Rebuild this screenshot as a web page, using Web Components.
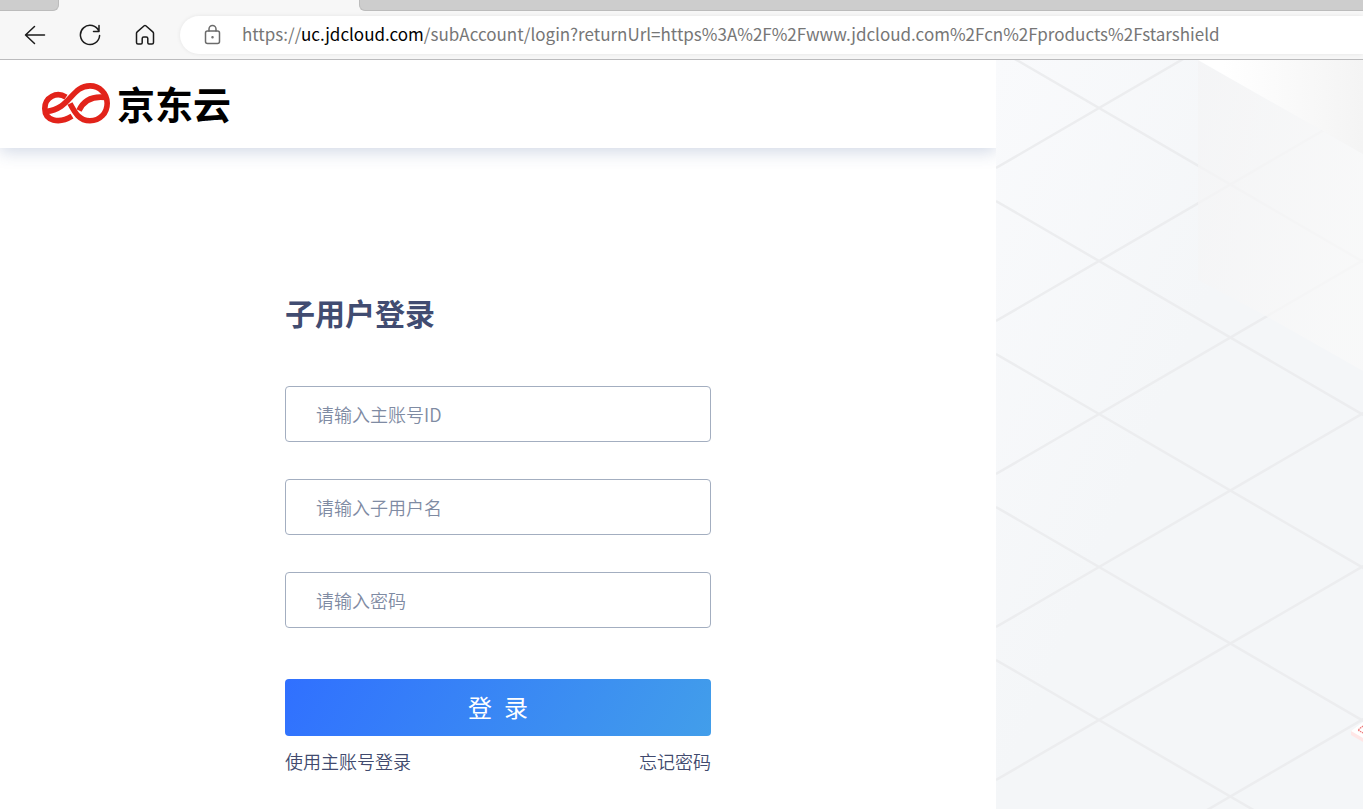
<!DOCTYPE html>
<html lang="zh-CN">
<head>
<meta charset="utf-8">
<meta name="viewport" content="width=device-width, initial-scale=1">
<title>子用户登录</title>
<style>
  html, body {
    margin: 0;
    min-height: 100%;
  }

  body {
    --color-title: #414c71;
    --color-link: #414a6e;
    --color-hint: #7f8ba3;
    --color-border: #a3aec0;
    background: #fff;
    display: flex;
    flex-direction: column;
    font-family: "Noto Sans CJK SC", sans-serif;
    min-height: 100vh;
    overflow: hidden;
  }
</style>
</head>
<body>
<browser-bar host="uc.jdcloud.com" path="/subAccount/login?returnUrl=https%3A%2F%2Fwww.jdcloud.com%2Fcn%2Fproducts%2Fstarshield"></browser-bar>
<login-page>
  <brand-header slot="header">京东云</brand-header>
  <login-form>
    <span slot="title">子用户登录</span>
    <login-field name="account" label="请输入主账号ID"></login-field>
    <login-field name="user" label="请输入子用户名"></login-field>
    <login-field name="password" type="password" label="请输入密码"></login-field>
    <span slot="submit">登&ensp;录</span>
    <a slot="links" href="#main">使用主账号登录</a>
    <a slot="links" href="#forgot">忘记密码</a>
  </login-form>
  <iso-backdrop slot="aside"></iso-backdrop>
</login-page>

<script>
const define = (tagName, html, setup) => {
  const template = document.createElement('template');
  template.innerHTML = html;

  customElements.define(tagName, class extends HTMLElement {
    constructor() {
      super();
      this.attachShadow({ mode: 'open' }).appendChild(template.content.cloneNode(true));
    }

    connectedCallback() {
      if (setup) setup(this, this.shadowRoot);
    }
  });
};

define('browser-bar', /* html */ `
  <style>
    :host {
      background: #f7f7f7;
      border-bottom: 1px solid #bbbbbd;
      display: block;
      flex: none;
    }

    .tabs {
      display: flex;
      gap: 300px;
      height: 11px;
    }

    .tab {
      background: #cdcdcd;
      border-bottom: 1px solid #bcbcbc;
      box-sizing: border-box;
    }

    .tab:first-child {
      border-radius: 0 0 6px 0;
      border-right: 1px solid #bcbcbc;
      width: 59px;
    }

    .tab:last-child {
      border-left: 1px solid #bcbcbc;
      border-radius: 0 0 0 6px;
      flex: 1;
    }

    .tools {
      align-items: center;
      display: flex;
      gap: 15px;
      height: 48px;
      padding-left: 15px;
    }

    button {
      background: none;
      border: 0;
      display: grid;
      height: 40px;
      padding: 0;
      place-items: center;
      width: 40px;
    }

    svg {
      display: block;
      fill: none;
      stroke: #1b1b1b;
      stroke-linecap: round;
      stroke-linejoin: round;
      stroke-width: 1.5;
    }

    .address {
      align-items: center;
      background: #fff;
      border-radius: 19px 0 0 19px;
      box-shadow: 0 0 4px rgba(0, 0, 0, 0.08);
      display: flex;
      flex: 1;
      gap: 18px;
      height: 38px;
      min-width: 0;
      padding-left: 22px;
    }

    .address svg {
      flex: none;
      stroke: #6b6b6b;
    }

    .url {
      color: #767676;
      font-size: 17px;
      line-height: 24px;
      outline: 0;
      overflow: hidden;
      padding-bottom: 2px;
      white-space: nowrap;
    }

    .host {
      color: #000;
    }
  </style>

  <div class="tabs"><div class="tab"></div><div class="tab"></div></div>
  <div class="tools">
    <button type="button" aria-label="Back">
      <svg width="22" height="22" viewBox="0 0 22 22"><path d="M20.5 11H1.5M10.5 2.5 1.5 11l9 8.500"/></svg>
    </button>
    <button type="button" aria-label="Refresh">
      <svg width="22" height="22" viewBox="0 0 22 22"><path d="M20 7.500A9.600 9.600 0 1 0 20.600 11.500M20 1.500V7.500H14.500"/></svg>
    </button>
    <button type="button" aria-label="Home">
      <svg width="22" height="22" viewBox="0 0 22 22"><path d="M2.500 9.300Q2.500 8.500 3.200 7.900L10.200 1.800Q11 1.100 11.800 1.800L18.800 7.900Q19.500 8.500 19.500 9.300V18.500Q19.500 20 18 20H15Q13.800 20 13.800 18.800V14.500Q13.800 13 12.300 13H9.700Q8.200 13 8.200 14.500V18.800Q8.200 20 7 20H4Q2.500 20 2.500 18.500Z"/></svg>
    </button>
    <div class="address">
      <svg width="22" height="22" viewBox="0 0 22 22"><rect x="3.500" y="7" width="14" height="12.500" rx="2"/><path d="M7 7V5a3.500 3.500 0 0 1 7 0V7"/><circle cx="10.500" cy="13.300" r=".5" fill="#6b6b6b"/></svg>
      <div class="url" role="textbox" contenteditable="true" spellcheck="false" aria-label="Address"><span>https://</span><span class="host"></span><span class="path"></span></div>
    </div>
  </div>
`, (el, root) => {
  root.querySelector('.host').textContent = el.getAttribute('host');
  root.querySelector('.path').textContent = el.getAttribute('path');
});

define('login-page', /* html */ `
  <style>
    :host {
      display: grid;
      flex: 1;
      grid-template-columns: minmax(0, 19fr) minmax(0, 7fr);
    }

    .panel {
      display: flex;
      flex-direction: column;
      overflow: hidden;
    }

    main {
      display: flex;
      justify-content: center;
      padding: 144px 24px 32px;
    }
  </style>

  <div class="panel">
    <slot name="header"></slot>
    <main><slot></slot></main>
  </div>
  <slot name="aside"></slot>
`);

define('brand-header', /* html */ `
  <style>
    :host {
      align-items: center;
      box-shadow: 0 4px 16px rgba(50, 80, 140, 0.22);
      box-sizing: border-box;
      color: #000;
      display: flex;
      font-size: 38px;
      font-weight: 700;
      gap: 7px;
      height: 88px;
      line-height: 40px;
      padding: 0 42px 2px;
    }

    svg {
      flex: none;
    }
  </style>

  <svg width="68" height="41" viewBox="0 0 68 41" fill="none" stroke="#e2231a" stroke-width="5.600" aria-hidden="true">
    <path d="M24 14.200C14.500 8 2.800 14.500 2.800 25.500C2.800 37.500 16.500 41.500 30 33.200"/>
    <path d="M37 27.500C41 19 48 12.500 63.500 14.500"/>
    <path d="M28 20.500C33 30 37.500 37.800 48 37.800C58 37.800 65.200 30 65.200 20.200C65.200 10.500 57.500 2.900 48 2.900C29 2.900 29 26 4 28.500"/>
  </svg>
  <slot></slot>
`);

define('login-form', /* html */ `
  <style>
    :host {
      display: block;
      max-width: 426px;
      width: 100%;
    }

    h1 {
      color: var(--color-title);
      font-size: 30px;
      font-weight: 700;
      line-height: 40px;
      margin: 0 0 54px;
    }

    .fields {
      display: grid;
      gap: 37px;
      margin-bottom: 51px;
    }

    button {
      background: linear-gradient(120deg, #3070ff, #429eea);
      border: 0;
      border-radius: 4px;
      color: #fff;
      display: block;
      font-family: inherit;
      font-size: 24px;
      height: 57px;
      line-height: 32px;
      padding: 0 0 2px;
      width: 100%;
    }

    .links {
      display: flex;
      justify-content: space-between;
      margin-top: 13px;
    }

    ::slotted(a) {
      color: var(--color-link);
      font-size: 18px;
      font-weight: 350;
      line-height: 24px;
      text-decoration: none;
    }
  </style>

  <form>
    <h1><slot name="title"></slot></h1>
    <div class="fields"><slot></slot></div>
    <button type="button"><slot name="submit"></slot></button>
    <div class="links"><slot name="links"></slot></div>
  </form>
`);

define('login-field', /* html */ `
  <style>
    :host {
      display: block;
    }

    input {
      background: #fff;
      border: 1px solid var(--color-border);
      border-radius: 4px;
      box-sizing: border-box;
      color: var(--color-title);
      display: block;
      font-family: inherit;
      font-size: 18px;
      font-weight: 350;
      height: 56px;
      line-height: 24px;
      padding: 0 30px;
      width: 100%;
    }

    input::placeholder {
      color: var(--color-hint);
      opacity: 1;
    }
  </style>

  <input>
`, (el, root) => {
  const input = root.querySelector('input');
  const label = el.getAttribute('label');
  input.type = el.getAttribute('type') || 'text';
  input.name = el.getAttribute('name');
  input.placeholder = label;
  input.setAttribute('aria-label', label);
});

define('iso-backdrop', /* html */ `
  <style>
    :host {
      background: #f4f6f8;
      display: grid;
      min-height: 0;
      overflow: hidden;
    }

    svg {
      display: block;
      height: 100%;
      width: 100%;
    }
  </style>

  <svg viewBox="0 0 367 749" preserveAspectRatio="xMinYMin slice" aria-hidden="true">
    <defs>
      <linearGradient id="floor" x1="0" y1="0" x2=".7" y2=".6">
        <stop offset="0" stop-color="#f9fafc"/>
        <stop offset=".7" stop-color="#f4f6f8"/>
      </linearGradient>
      <linearGradient id="wall" x1="0" y1="0" x2="1" y2=".3">
        <stop offset="0" stop-color="#f4f4f5"/>
        <stop offset="1" stop-color="#f9f9f9"/>
      </linearGradient>
      <linearGradient id="top" x1="0" y1="0" x2="1" y2="0">
        <stop offset=".15" stop-color="#fff"/>
        <stop offset="1" stop-color="#f4f4f4"/>
      </linearGradient>
    </defs>
    <rect width="367" height="749" fill="url(#floor)"/>
    <g class="lines" stroke="#ecedef" stroke-width="2.500"></g>
    <path d="M202 0 367 94V311L270 256 202 220Z" fill="url(#wall)" opacity=".75"/>
    <path d="M202 0H367V94Z" fill="url(#top)"/>
    <path d="M355 671 367 663V682L355 675Z" fill="#ffe6e6"/>
    <path d="M355 671 367 662V678Z" fill="#fff"/>
    <path d="M367 666 362 670 367 673" fill="none" stroke="#ee7777" stroke-width="1.300" stroke-dasharray="1.500 .7"/>
  </svg>
`, (el, root) => {
  // isometric floor grid, one pair of diagonals every 153 units
  let d = '';
  for (let y = -165; y < 1000; y += 153) {
    d += `M0 ${y}L400 ${y + 233}M0 ${y + 120}L400 ${y - 113}`;
  }
  const path = document.createElementNS('http://www.w3.org/2000/svg', 'path');
  path.setAttribute('d', d);
  root.querySelector('.lines').append(path);
});
</script>
</body>
</html>
